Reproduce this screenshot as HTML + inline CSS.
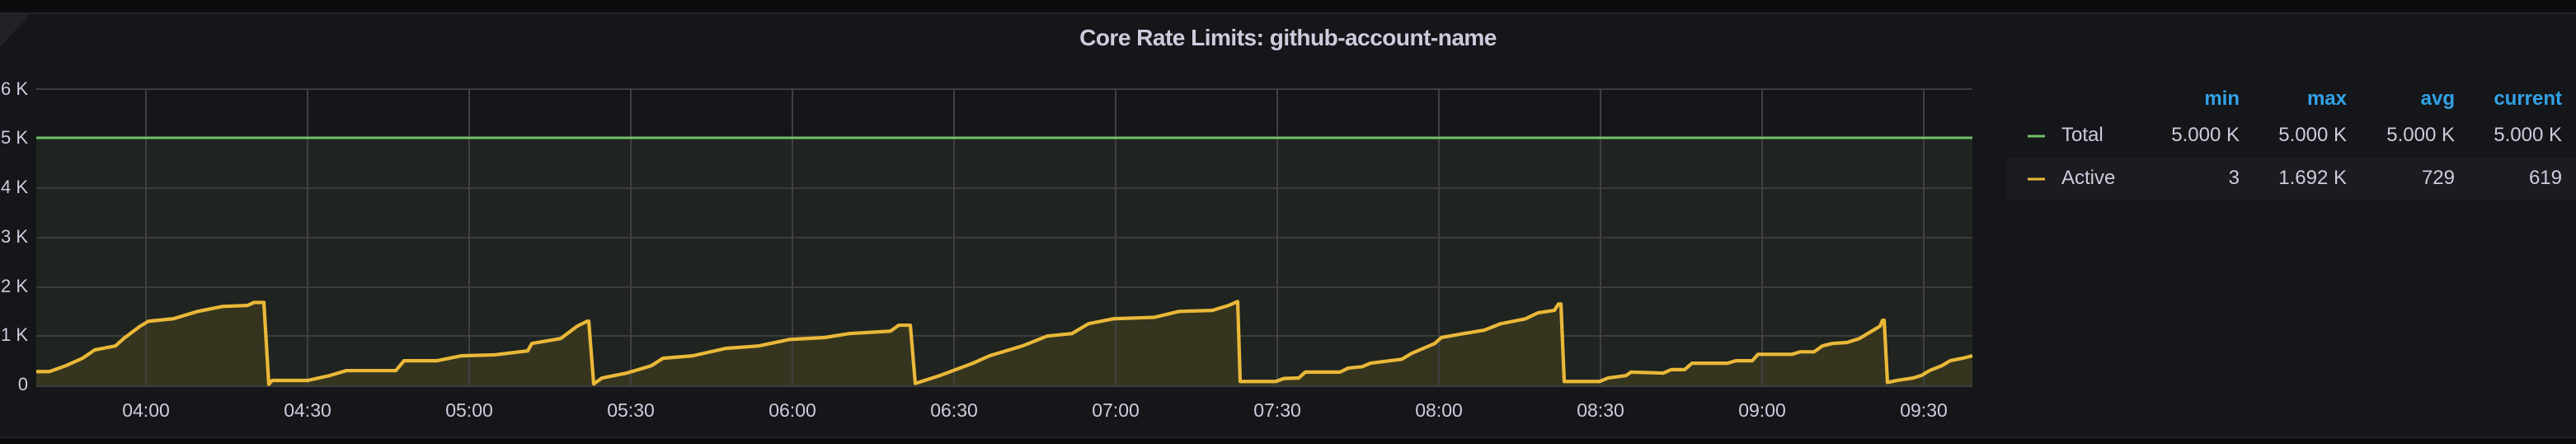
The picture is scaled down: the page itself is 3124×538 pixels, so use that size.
<!DOCTYPE html>
<html><head><meta charset="utf-8"><style>
html,body{margin:0;padding:0;background:#141619;}
body{width:3124px;height:536px;position:relative;overflow:hidden;font-family:"Liberation Sans",sans-serif;}
.top{position:absolute;left:0;top:0;width:3124px;height:15px;background:#0b0c0e;border-bottom:2px solid #202226;}
.bot{position:absolute;left:0;top:529px;width:3124px;height:7px;background:#0b0c0e;border-top:2px solid #202226;}
.title{position:absolute;left:0;width:3124px;top:30px;text-align:center;color:#ccccdc;font-size:28px;font-weight:bold;letter-spacing:-0.5px;}
.yl{position:absolute;right:3090px;color:#ccccdc;font-size:22px;white-space:nowrap;}
.xl{position:absolute;top:484px;color:#ccccdc;font-size:23px;width:100px;margin-left:-50px;text-align:center;}
.lg{position:absolute;color:#ccccdc;font-size:24px;}
.h{color:#33a2e5;font-weight:bold;}
.r{text-align:right;width:200px;}
</style></head><body>
<div class="top"></div>
<div class="bot"></div>
<svg width="40" height="60" style="position:absolute;left:0;top:17px"><polygon points="0,0 37,0 0,40" fill="#202226"/></svg>
<div class="title">Core Rate Limits: github-account-name</div>

<div class="yl" style="top:95px;right:3090px">6 K</div>
<div class="yl" style="top:154px">5 K</div>
<div class="yl" style="top:214px">4 K</div>
<div class="yl" style="top:274px">3 K</div>
<div class="yl" style="top:334px">2 K</div>
<div class="yl" style="top:393px">1 K</div>
<div class="yl" style="top:453px">0</div>

<svg width="3124" height="536" style="position:absolute;left:0;top:0">
<rect x="44" y="168" width="2348" height="300" fill="#1f2420"/>
<g stroke="#3a3c3e" stroke-width="2">
<line x1="44" x2="2392" y1="108" y2="108"/><line x1="44" x2="2392" y1="228" y2="228"/>
<line x1="44" x2="2392" y1="288" y2="288"/><line x1="44" x2="2392" y1="348" y2="348"/>
<line x1="44" x2="2392" y1="407" y2="407"/>
</g>
<g transform="translate(0,467) scale(1,-59.8)">
<path d="M44,0 L44,0.28 60,0.28 80,0.4 100,0.55 115,0.72 140,0.8 150,0.95 170,1.2 180,1.3 210,1.35 240,1.5 270,1.6 300,1.62 308,1.68 320,1.68 326,0.02 330,0.1 373,0.1 400,0.2 420,0.3 480,0.3 490,0.5 530,0.5 560,0.6 600,0.62 640,0.7 645,0.85 680,0.95 700,1.2 712,1.3 714,1.3 720,0.03 730,0.15 760,0.25 790,0.4 804,0.55 840,0.6 880,0.75 920,0.8 957,0.93 1000,0.97 1030,1.05 1080,1.1 1090,1.22 1104,1.22 1110,0.04 1140,0.2 1180,0.45 1200,0.6 1240,0.8 1270,1.0 1300,1.05 1320,1.25 1350,1.35 1400,1.38 1430,1.5 1470,1.52 1490,1.62 1501,1.7 1504,0.08 1547,0.08 1557,0.14 1575,0.15 1583,0.27 1625,0.27 1635,0.35 1652,0.38 1662,0.45 1700,0.53 1712,0.65 1740,0.85 1748,0.97 1775,1.05 1800,1.12 1820,1.25 1850,1.35 1865,1.47 1885,1.52 1890,1.65 1893,1.65 1897,0.08 1940,0.08 1950,0.15 1972,0.2 1978,0.27 2017,0.25 2027,0.32 2043,0.32 2052,0.45 2095,0.45 2105,0.5 2125,0.5 2132,0.63 2173,0.63 2183,0.68 2200,0.68 2210,0.8 2222,0.85 2240,0.87 2255,0.95 2265,1.05 2275,1.15 2280,1.2 2283,1.32 2285,1.32 2289,0.06 2300,0.1 2320,0.15 2330,0.2 2340,0.3 2355,0.4 2365,0.5 2380,0.55 2392,0.6 L2392,0 Z" fill="#35351f" stroke="none"/>
</g>
<g stroke="#3e4042" stroke-width="2">
<line x1="177" x2="177" y1="108" y2="468"/><line x1="373" x2="373" y1="108" y2="468"/>
<line x1="569" x2="569" y1="108" y2="468"/><line x1="765" x2="765" y1="108" y2="468"/>
<line x1="961" x2="961" y1="108" y2="468"/><line x1="1157" x2="1157" y1="108" y2="468"/>
<line x1="1353" x2="1353" y1="108" y2="468"/><line x1="1549" x2="1549" y1="108" y2="468"/>
<line x1="1745" x2="1745" y1="108" y2="468"/><line x1="1941" x2="1941" y1="108" y2="468"/>
<line x1="2137" x2="2137" y1="108" y2="468"/><line x1="2333" x2="2333" y1="108" y2="468"/>
</g>
<line x1="44" x2="2392" y1="468" y2="468" stroke="#3a3c3e" stroke-width="2"/>
<line x1="44" x2="2392" y1="167" y2="167" stroke="#73bf69" stroke-width="3"/>
<g transform="translate(0,467) scale(1,-59.8)">
<path d="M44,0.28 60,0.28 80,0.4 100,0.55 115,0.72 140,0.8 150,0.95 170,1.2 180,1.3 210,1.35 240,1.5 270,1.6 300,1.62 308,1.68 320,1.68 326,0.02 330,0.1 373,0.1 400,0.2 420,0.3 480,0.3 490,0.5 530,0.5 560,0.6 600,0.62 640,0.7 645,0.85 680,0.95 700,1.2 712,1.3 714,1.3 720,0.03 730,0.15 760,0.25 790,0.4 804,0.55 840,0.6 880,0.75 920,0.8 957,0.93 1000,0.97 1030,1.05 1080,1.1 1090,1.22 1104,1.22 1110,0.04 1140,0.2 1180,0.45 1200,0.6 1240,0.8 1270,1.0 1300,1.05 1320,1.25 1350,1.35 1400,1.38 1430,1.5 1470,1.52 1490,1.62 1501,1.7 1504,0.08 1547,0.08 1557,0.14 1575,0.15 1583,0.27 1625,0.27 1635,0.35 1652,0.38 1662,0.45 1700,0.53 1712,0.65 1740,0.85 1748,0.97 1775,1.05 1800,1.12 1820,1.25 1850,1.35 1865,1.47 1885,1.52 1890,1.65 1893,1.65 1897,0.08 1940,0.08 1950,0.15 1972,0.2 1978,0.27 2017,0.25 2027,0.32 2043,0.32 2052,0.45 2095,0.45 2105,0.5 2125,0.5 2132,0.63 2173,0.63 2183,0.68 2200,0.68 2210,0.8 2222,0.85 2240,0.87 2255,0.95 2265,1.05 2275,1.15 2280,1.2 2283,1.32 2285,1.32 2289,0.06 2300,0.1 2320,0.15 2330,0.2 2340,0.3 2355,0.4 2365,0.5 2380,0.55 2392,0.6" fill="none" stroke="#eab839" stroke-width="4.2" vector-effect="non-scaling-stroke" stroke-linejoin="round"/>
</g>
<rect x="2434" y="191" width="690" height="51" fill="#1a1c1f"/>
<line x1="2459" x2="2480" y1="165" y2="165" stroke="#73bf69" stroke-width="3"/>
<line x1="2459" x2="2480" y1="217" y2="217" stroke="#eab839" stroke-width="3"/>
</svg>

<div class="xl" style="left:177px">04:00</div>
<div class="xl" style="left:373px">04:30</div>
<div class="xl" style="left:569px">05:00</div>
<div class="xl" style="left:765px">05:30</div>
<div class="xl" style="left:961px">06:00</div>
<div class="xl" style="left:1157px">06:30</div>
<div class="xl" style="left:1353px">07:00</div>
<div class="xl" style="left:1549px">07:30</div>
<div class="xl" style="left:1745px">08:00</div>
<div class="xl" style="left:1941px">08:30</div>
<div class="xl" style="left:2137px">09:00</div>
<div class="xl" style="left:2333px">09:30</div>

<div class="lg h r" style="left:2516px;top:106px">min</div>
<div class="lg h r" style="left:2646px;top:106px">max</div>
<div class="lg h r" style="left:2777px;top:106px">avg</div>
<div class="lg h r" style="left:2907px;top:106px">current</div>

<div class="lg" style="left:2500px;top:150px">Total</div>
<div class="lg r" style="left:2516px;top:150px">5.000 K</div>
<div class="lg r" style="left:2646px;top:150px">5.000 K</div>
<div class="lg r" style="left:2777px;top:150px">5.000 K</div>
<div class="lg r" style="left:2907px;top:150px">5.000 K</div>

<div class="lg" style="left:2500px;top:202px">Active</div>
<div class="lg r" style="left:2516px;top:202px">3</div>
<div class="lg r" style="left:2646px;top:202px">1.692 K</div>
<div class="lg r" style="left:2777px;top:202px">729</div>
<div class="lg r" style="left:2907px;top:202px">619</div>
</body></html>
